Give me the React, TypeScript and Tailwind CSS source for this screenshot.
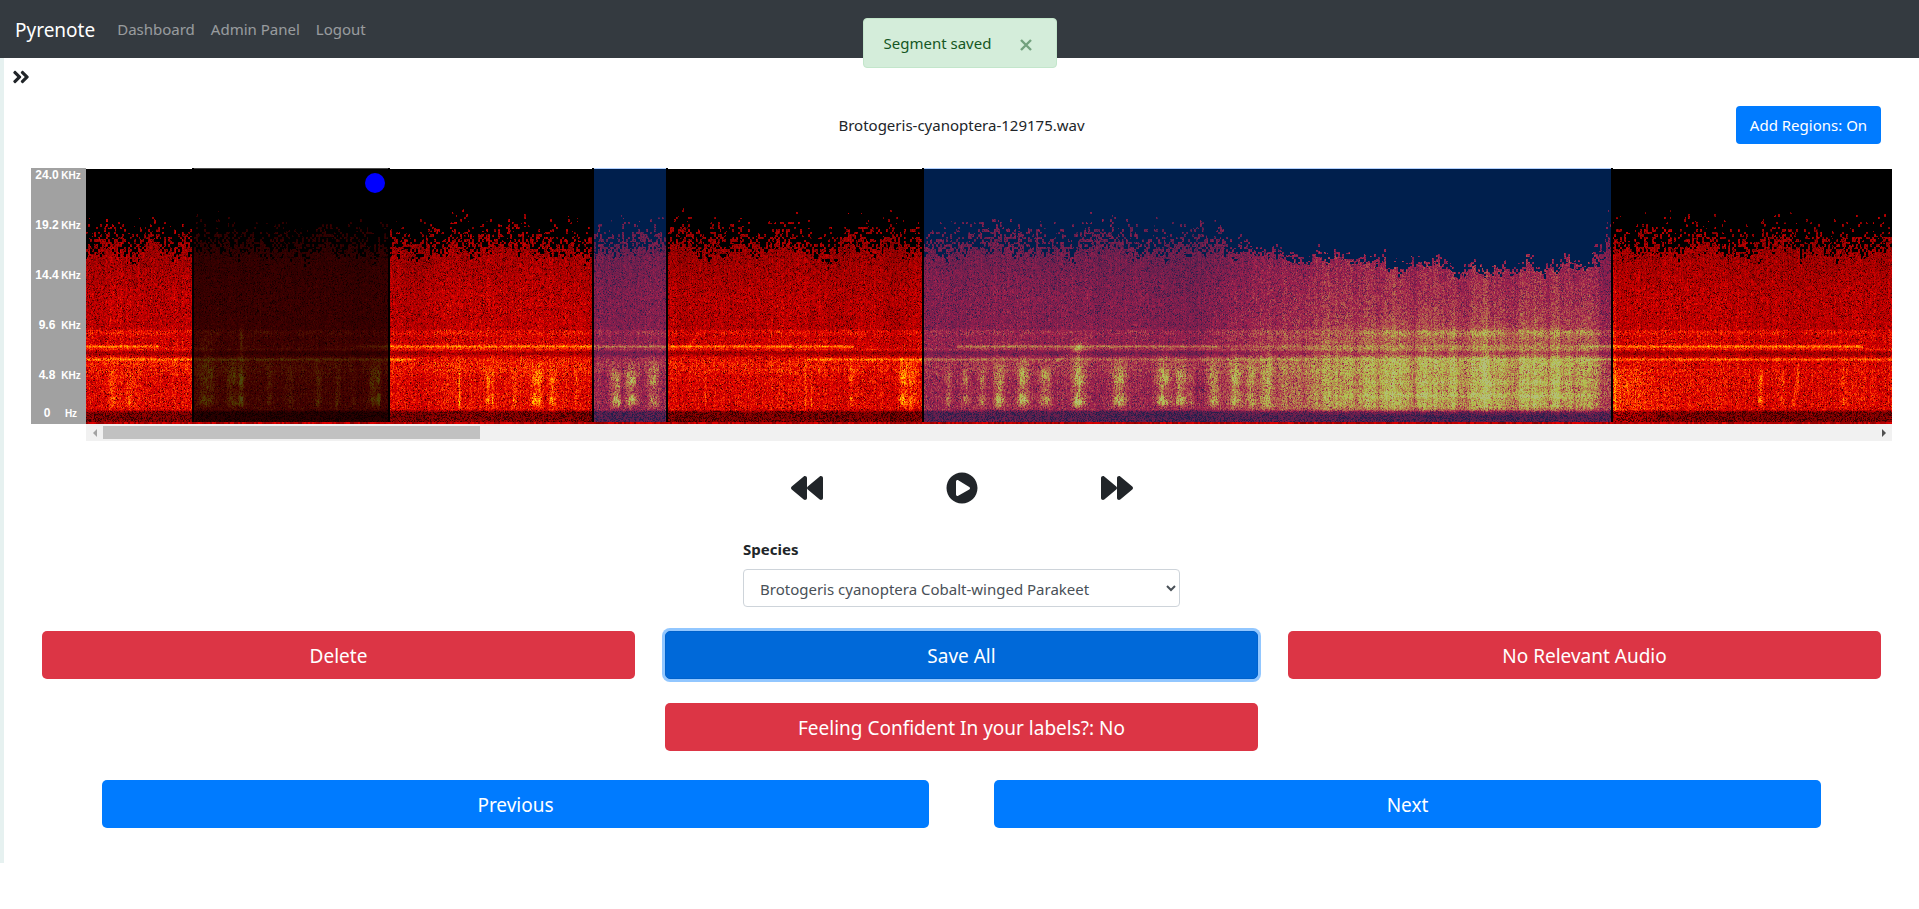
import { useLayoutEffect, useRef, useState } from "react";
import {
  FaAngleDoubleRight,
  FaBackward,
  FaForward,
  FaPlayCircle,
} from "react-icons/fa";

const TRACK_WIDTH = 1806;
const TRACK_HEIGHT = 255;

type Region = { start: number; end: number; tone: "active" | "saved" };

const regions: Region[] = [
  { start: 106, end: 304, tone: "active" },
  { start: 506, end: 582, tone: "saved" },
  { start: 836, end: 1527, tone: "saved" },
];

const ticks = [
  { value: "24.0", unit: "KHz", height: "h-[50px]" },
  { value: "19.2", unit: "KHz", height: "h-[50px]" },
  { value: "14.4", unit: "KHz", height: "h-[50px]" },
  { value: "9.6", unit: "KHz", height: "h-[50px]" },
  { value: "4.8", unit: "KHz", height: "h-[38px]" },
  { value: "0", unit: "Hz", height: "h-[18px]" },
];

// Bird calls: [x, half width, strength, top of the call]
const calls: [number, number, number, number][] = [
  [26, 3, 0.12, 210], [45, 5, 0.12, 212],
  [118, 5, 0.24, 172], [125, 3, 0.14, 168], [146, 5, 0.22, 196], [155, 2, 0.44, 160],
  [183, 2, 0.14, 200], [204, 3, 0.12, 205], [232, 3, 0.16, 202], [251, 2, 0.16, 205],
  [267, 2, 0.1, 208], [286, 3, 0.26, 198], [292, 2, 0.3, 198],
  [373, 1, 0.2, 190], [401, 2, 0.16, 205], [406, 1, 0.26, 190], [428, 2, 0.14, 207],
  [448, 3, 0.2, 203], [453, 2, 0.18, 200], [466, 3, 0.16, 206], [490, 1, 0.1, 206],
  [528, 3, 0.3, 202], [532, 2, 0.3, 210], [545, 5, 0.34, 200], [567, 4, 0.26, 196],
  [619, 1, 0.08, 210], [719, 1, 0.12, 200], [725, 1, 0.16, 205], [765, 2, 0.14, 200],
  [817, 4, 0.24, 192], [826, 4, 0.16, 196],
  [862, 3, 0.16, 204], [879, 3, 0.2, 207], [896, 3, 0.2, 200], [913, 4, 0.34, 198],
  [937, 5, 0.34, 194], [959, 5, 0.28, 198], [992, 5, 0.42, 176], [1033, 6, 0.34, 194],
  [1077, 6, 0.36, 188], [1094, 5, 0.34, 194], [1104, 3, 0.18, 200],
  [1127, 5, 0.24, 190], [1149, 5, 0.24, 192], [1164, 4, 0.18, 192], [1180, 4, 0.18, 192],
  [1674, 2, 0.2, 204], [1696, 2, 0.12, 206], [1757, 1, 0.14, 196], [1778, 1, 0.1, 160],
];

const quietColumns = [1139, 1158, 1190, 1217, 1326, 1380, 1428, 1490];

function hash(x: number, y: number) {
  let h = Math.imul(x + 11, 374761393) ^ Math.imul(y + 7, 668265263);
  h = Math.imul(h ^ (h >>> 13), 1274126177);
  h = Math.imul(h ^ (h >>> 16), 2246822519);
  return ((h ^ (h >>> 15)) >>> 0) / 4294967296;
}

function smooth(x: number, seed: number) {
  const i = Math.floor(x);
  const f = x - i;
  const t = f * f * (3 - 2 * f);
  return hash(i, seed) * (1 - t) + hash(i + 1, seed) * t;
}

const bump = (d: number, width: number) => Math.exp(-(d * d) / (2 * width * width));
const clamp = (v: number) => Math.max(0, Math.min(1, v));

function chorus(x: number) {
  const rise = clamp((x - 1110) / 200);
  const fall = 1 - clamp((x - 1496) / 20);
  let level = Math.pow(rise, 0.75) * (0.3 + 0.7 * fall);
  for (const q of quietColumns) level *= 1 - 0.4 * bump(x - q, 4);
  return level * (0.7 + 0.36 * smooth(x / 7, 31) + 0.3 * (smooth(x / 2, 32) - 0.5));
}

function paintSpectrogram(ctx: CanvasRenderingContext2D) {
  const image = ctx.createImageData(TRACK_WIDTH, TRACK_HEIGHT);
  const data = image.data;
  const callAt = new Float32Array(TRACK_WIDTH * TRACK_HEIGHT);

  for (const [cx, half, strength, top] of calls) {
    for (let x = Math.max(0, cx - half * 3); x <= Math.min(TRACK_WIDTH - 1, cx + half * 3); x++) {
      for (let y = top - 12; y < 242; y++) {
        const fadeIn = clamp((y - top + 12) / 14);
        const fadeOut = clamp((242 - y) / 7);
        const knots = 0.34 + 0.55 * bump(y - 209, 7) + 0.75 * bump(y - 231, 4);
        const wobble = 0.4 + 0.6 * hash(x, 400 + (y >> 2)) + 0.6 * hash(x >> 1, 700 + (y >> 3));
        callAt[y * TRACK_WIDTH + x] +=
          strength * bump(x - cx, half * 0.8) * fadeIn * fadeOut * knots * wobble;
      }
    }
  }

  for (let x = 0; x < TRACK_WIDTH; x++) {
    const loud = x > 1100 && x < 1530 ? chorus(x) : 0;
    const shaped = clamp((x - 1120) / 50) * (1 - clamp((x - 1500) / 22));
    const ragged = 10 * (smooth(x / 3, 44) - 0.5);
    const edge = 34 + 10 * smooth(x / 22, 3) + 10 * smooth(x / 7, 4) + ragged;
    const loudEdge =
      70 + 14 * clamp((x - 1200) / 200) + 12 * smooth(x / 14, 5) + 12 * (hash(Math.floor(x / 4), 6) - 0.5);
    const top = edge * (1 - shaped) + loudEdge * shaped;
    const span = 58 * (1 - shaped) + 20 * shaped;
    const columnTint = 0.94 + 0.12 * hash(x, 91);
    const highLine = x < 74 || (x > 245 && x < 768) || x > 870;
    const lowLine = x < 330 || x > 720;
    const tail = x > 1527 ? bump(x - 1527, 26) : 0;

    for (let y = 0; y < TRACK_HEIGHT; y++) {
      const grain = hash(x, y) * 0.6 + hash(x, 900 + (y >> 1)) * 0.4;
      const patch = hash(x >> 1, 2000 + Math.floor(y / 2.5));
      const p = clamp((y - top) / span);
      const lit = y > top && patch < Math.pow(p, 1.7) * 1.5;

      let mean = 0.31 + 0.06 * clamp((y - 80) / 50);
      if (y > 160) mean = 0.41;
      if (y > 199) mean = 0.44;
      mean += 0.05 * bump(y - 163, 2) * (0.4 + smooth(x / 16, 8));
      mean -= 0.1 * bump(y - 184, 2);
      mean += (x < 1520 ? 0.08 : 0.02) * bump(y - 195, 6);
      mean += 0.04 * (smooth(x / 30, 61) - 0.5) + tail * 0.1 * clamp((y - 190) / 20);
      if (y > 240) mean -= 0.18 * clamp((y - 240) / 3);
      const holeChance = y < 150 ? 0.09 : y > 241 ? 0.3 : 0.05;
      const hole = hash(x + 5000, y) < holeChance ? 0.42 : 1;
      let v = mean * columnTint * (0.66 + 0.66 * grain) * hole;
      if (highLine && x < 1777) {
        const gain = x > 245 && x < 300 ? (x - 245) / 55 : x > 1130 && x < 1500 ? 0.4 : 1;
        v += 0.24 * bump(y - 177, 1) * gain * (0.8 + 0.35 * hash(x, 71));
      }
      v += 0.08 * bump(y - 180, 1);
      if (lowLine) v += (x > 900 && x < 1500 ? 0.12 : 0.18) * bump(y - 190, 1) * (0.8 + 0.35 * hash(x, 72));
      v += callAt[y * TRACK_WIDTH + x] * (0.75 + 0.5 * grain);
      if (loud > 0) {
        const low = clamp((y - 176) / 28);
        const mid = clamp((y - 130) / 40);
        let profile = 0.17 + 0.09 * mid + 0.16 * low;
        profile *= clamp((246 - y) / 9);
        profile += 0.1 * bump(y - 164, 3) * clamp((x - 1260) / 60);
        profile += 0.07 * bump(y - 194, 3) * clamp((x - 1260) / 60);
        profile += 0.1 * bump(y - 213, 2) * clamp((x - 1260) / 60);
        profile += 0.16 * bump(y - 226, 2) * clamp((x - 1220) / 80);
        v += loud * profile * (0.8 + 0.4 * grain);
      }

      // Sweeping whistles between the low bands
      if (x > 594 && x < 612 && Math.abs(y - (192 - (x - 594) * 1.6)) < 3) v += 0.07;
      if (x > 966 && x < 994 && Math.abs(y - (194 - (x - 966) * 0.6)) < 2) v += 0.08;
      if (x > 1700 && x < 1713 && Math.abs(x - 1713 + (y - 198) * 0.16) < 2 && y < 238) v += 0.1;

      if (y < 130 && !lit) v = 0;
      if (y >= 253) v = 0.26 + 0.2 * hash(x >> 1, 5);

      const i = (y * TRACK_WIDTH + x) * 4;
      v = Math.min(v, 0.97);
      if (v < 0.45) {
        data[i] = (v / 0.45) * 228;
      } else {
        data[i] = 228 + clamp((v - 0.45) / 0.1) * 27;
        data[i + 1] = clamp((v - 0.45) / 0.36) * 228;
        data[i + 2] = clamp((v - 0.86) / 0.3) * 190;
      }
      data[i + 3] = 255;
    }
  }
  ctx.putImageData(image, 0, 0);
}

function Spectrogram() {
  const ref = useRef<HTMLCanvasElement>(null);
  useLayoutEffect(() => {
    const ctx = ref.current?.getContext("2d");
    if (ctx) paintSpectrogram(ctx);
  }, []);

  return (
    <div className="relative pt-px">
      <canvas
        ref={ref}
        width={TRACK_WIDTH}
        height={TRACK_HEIGHT}
        aria-label="Spectrogram"
        className="block h-[255px] w-full bg-black"
      />
      {regions.map((r) => (
        <div
          key={r.start}
          className={
            r.tone === "active"
              ? "absolute top-0 h-[254px] border-x-2 border-black bg-black/70"
              : "absolute top-0 h-[254px] border-x-2 border-black bg-[#0066ff]/30"
          }
          style={{
            left: `${(r.start / TRACK_WIDTH) * 100}%`,
            width: `${((r.end - r.start) / TRACK_WIDTH) * 100}%`,
          }}
        >
          {r.tone === "active" && (
            <span className="absolute top-[5px] right-[3px] size-5 rounded-full bg-[#0000ff]" />
          )}
        </div>
      ))}
    </div>
  );
}

function ScrollBar() {
  return (
    <div className="flex h-[17px] items-center bg-[#f1f1f1]">
      <button type="button" aria-label="Scroll left" className="flex h-full w-[17px] items-center justify-center text-[#a3a3a3]">
        <svg viewBox="0 0 4 8" className="h-2 w-1" fill="currentColor">
          <path d="M4 0v8L0 4z" />
        </svg>
      </button>
      <div className="flex-1">
        <div className="h-[13px] w-[21.3%] bg-[#c1c1c1]" />
      </div>
      <button type="button" aria-label="Scroll right" className="flex h-full w-[17px] items-center justify-center text-[#505050]">
        <svg viewBox="0 0 4 8" className="h-2 w-1" fill="currentColor">
          <path d="M0 0v8l4-4z" />
        </svg>
      </button>
    </div>
  );
}

function FrequencyAxis() {
  return (
    <div className="h-[256px] w-[55px] shrink-0 bg-[#a1a1a1] font-['Liberation_Sans',Arial,sans-serif] font-bold text-white">
      {ticks.map((t) => (
        <div key={t.value} className={`flex items-start pl-1 ${t.height}`}>
          <span className="w-6 text-center text-xs leading-[14px]">{t.value}</span>
          <span className="w-6 text-center text-[10px] leading-[15px]">{t.unit}</span>
        </div>
      ))}
    </div>
  );
}

const wideButton = "h-12 w-full rounded-[5px] pt-0.5 text-[19px] leading-[30px] text-white";

export default function App() {
  const [toast, setToast] = useState(true);

  return (
    <div className="bg-white font-['Segoe_UI','Noto_Sans',sans-serif] text-[15px] leading-6 text-[#212529]">
      <nav className="flex h-[58px] items-center bg-[#343a40] px-[15px] text-white/50">
        <a href="#home" className="mr-[22px] pt-0.5 text-[19px] leading-[30px] text-white">
          Pyrenote
        </a>
        <div className="flex gap-4">
          <a href="#dashboard">Dashboard</a>
          <a href="#admin">Admin Panel</a>
          <a href="#logout">Logout</a>
        </div>
      </nav>

      {toast && (
        <div
          role="alert"
          className="absolute top-[18px] left-1/2 flex h-[50px] w-[194px] -translate-x-1/2 items-center justify-between rounded border border-[#c3e6cb] bg-[#d4edda] pr-[22px] pl-5 text-[#155724]"
        >
          <span>Segment saved</span>
          <button
            type="button"
            aria-label="Close"
            onClick={() => setToast(false)}
            className="flex size-4 items-end justify-center opacity-50"
          >
            <svg viewBox="0 0 12 12" className="size-3" stroke="currentColor" strokeWidth="2.4" fill="none">
              <path d="M1 1l10 10M11 1L1 11" />
            </svg>
          </button>
        </div>
      )}

      <div className="flex">
        <aside className="w-1 shrink-0 bg-[#e6f1f0]" />
        <main className="min-w-0 flex-1 pb-[35px]">
          <button type="button" aria-label="Open sidebar" className="ml-[7px] block pt-[9px] text-xl">
            <FaAngleDoubleRight />
          </button>

          <div className="px-[27px]">
            <div className="mt-[19px] grid grid-cols-3 items-center px-[11px]">
              <span className="col-start-2 text-center">Brotogeris-cyanoptera-129175.wav</span>
              <button type="button" className="h-[38px] w-[145px] justify-self-end rounded bg-[#007bff] text-white">
                Add Regions: On
              </button>
            </div>

            <div className="mt-6 flex">
              <FrequencyAxis />
              <div className="min-w-0 flex-1">
                <Spectrogram />
                <ScrollBar />
              </div>
            </div>

            <div className="mt-[31px] flex justify-center gap-[123px] text-[32px]">
              <button type="button" aria-label="Rewind">
                <FaBackward />
              </button>
              <button type="button" aria-label="Play">
                <FaPlayCircle />
              </button>
              <button type="button" aria-label="Fast forward">
                <FaForward />
              </button>
            </div>

            <div className="mx-auto mt-[33px] w-[437px]">
              <label htmlFor="species" className="block font-bold">
                Species
              </label>
              <select
                id="species"
                className="mt-2 block h-[38px] w-full rounded border border-[#ced4da] bg-white px-3 pt-0.5 text-[#495057]"
              >
                <option>Brotogeris cyanoptera Cobalt-winged Parakeet</option>
              </select>
            </div>

            <div className="mt-6 grid grid-cols-3 gap-x-[30px] gap-y-6 px-[11px]">
              <button type="button" className={`${wideButton} bg-[#dc3545]`}>
                Delete
              </button>
              <button
                type="button"
                className={`${wideButton} border border-[#0062cc] bg-[#0069d9] ring-3 ring-[#268fff]/50`}
              >
                Save All
              </button>
              <button type="button" className={`${wideButton} bg-[#dc3545]`}>
                No Relevant Audio
              </button>
              <button type="button" className={`${wideButton} col-start-2 bg-[#dc3545]`}>
                Feeling Confident In your labels?: No
              </button>
            </div>

            <div className="mt-[29px] grid grid-cols-2 gap-[65px] px-[71px]">
              <button type="button" className={`${wideButton} bg-[#007bff]`}>
                Previous
              </button>
              <button type="button" className={`${wideButton} bg-[#007bff]`}>
                Next
              </button>
            </div>
          </div>
        </main>
      </div>
    </div>
  );
}
